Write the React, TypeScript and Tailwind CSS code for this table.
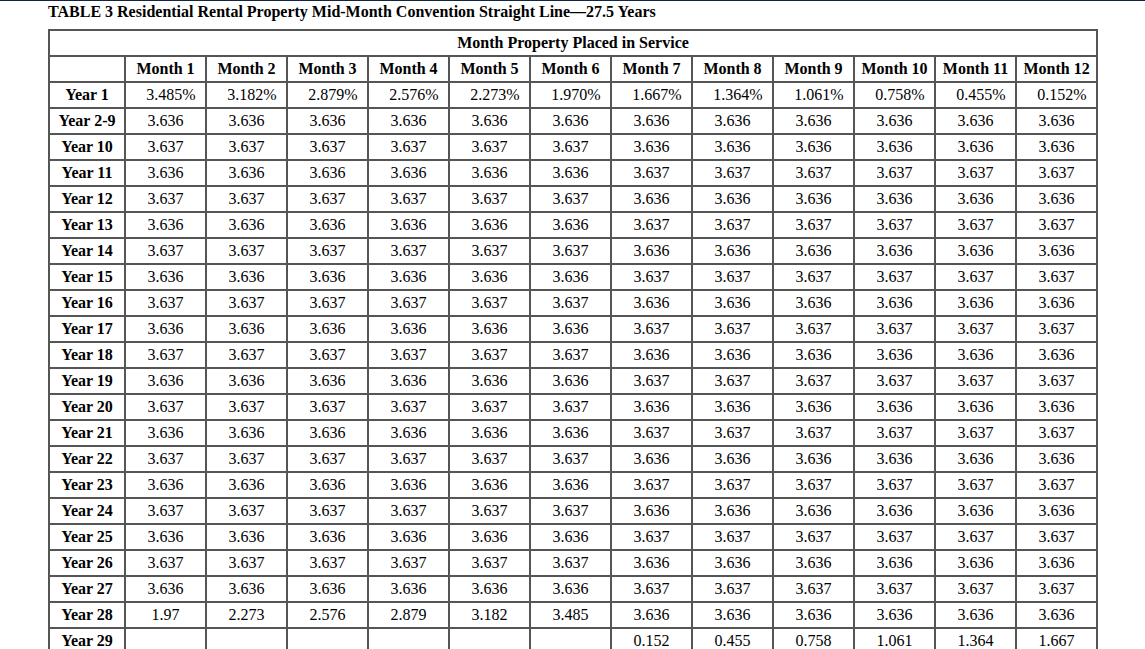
const months = Array.from({ length: 12 }, (_, i) => `Month ${i + 1}`);

const yearOne = ['3.485%', '3.182%', '2.879%', '2.576%', '2.273%', '1.970%', '1.667%', '1.364%', '1.061%', '0.758%', '0.455%', '0.152%'];

type Row = { label: string; cells: string[]; pct?: boolean };

const rows: Row[] = [
  { label: 'Year 1', cells: yearOne, pct: true },
  { label: 'Year 2-9', cells: Array(12).fill('3.636') },
];

for (let y = 10; y <= 27; y++) {
  const a = y % 2 === 0 ? '3.637' : '3.636';
  const b = y % 2 === 0 ? '3.636' : '3.637';
  rows.push({ label: `Year ${y}`, cells: [...Array(6).fill(a), ...Array(6).fill(b)] });
}

rows.push({
  label: 'Year 28',
  cells: ['1.97', '2.273', '2.576', '2.879', '3.182', '3.485', ...Array(6).fill('3.636')],
});
rows.push({
  label: 'Year 29',
  cells: ['', '', '', '', '', '', '0.152', '0.455', '0.758', '1.061', '1.364', '1.667'],
});

const cell = 'border-2 border-[#555] p-0 leading-[24px] text-center';

export default function App() {
  return (
    <div className="min-h-screen bg-white border-t border-[#0f2540] text-black font-['Liberation_Serif',serif]">
      <div className="pl-[48px] pt-px">
        <h1 className="text-[16px] font-bold leading-[20px] h-[27px]">
          TABLE 3 Residential Rental Property Mid-Month Convention Straight Line—27.5 Years
        </h1>
        <table className="border-collapse table-fixed w-[1049px] text-[16px]">
          <colgroup>
            <col className="w-[76px]" />
            {months.map((m) => (
              <col key={m} className="w-[81px]" />
            ))}
          </colgroup>
          <thead>
            <tr>
              <th colSpan={13} className={`${cell} font-bold`}>
                Month Property Placed in Service
              </th>
            </tr>
            <tr>
              <th className={cell}></th>
              {months.map((m) => (
                <th key={m} className={`${cell} font-bold`}>
                  {m}
                </th>
              ))}
            </tr>
          </thead>
          <tbody>
            {rows.map((r) => (
              <tr key={r.label}>
                <th className={`${cell} font-bold`}>{r.label}</th>
                {r.cells.map((c, i) => (
                  <td key={i} className={`${cell} font-normal ${r.pct ? 'pl-[11px]' : ''}`}>
                    {c}
                  </td>
                ))}
              </tr>
            ))}
          </tbody>
        </table>
      </div>
    </div>
  );
}
